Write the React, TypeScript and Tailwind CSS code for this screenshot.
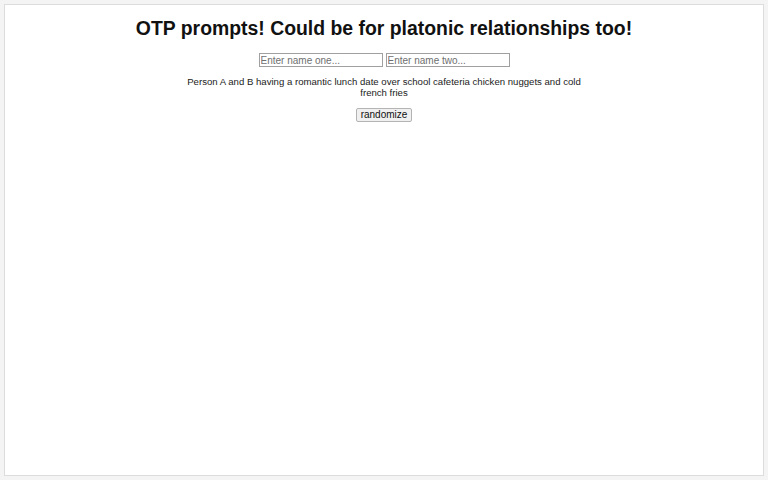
import { useState } from "react";

const prompts = [
  "Person A and B having a romantic lunch date over school cafeteria chicken nuggets and cold french fries",
  "Person A teaching B how to ride a bike in an empty parking lot at midnight",
  "Person A and B getting stuck in an elevator with a half-eaten box of donuts",
];

export default function App() {
  const [one, setOne] = useState("");
  const [two, setTwo] = useState("");
  const [idx, setIdx] = useState(0);

  const a = one.trim() || "A";
  const b = two.trim() || "B";
  const text = prompts[idx]
    .replace("Person A", `Person ${a}`)
    .replace("and B", `and ${b}`)
    .replace("B how", `${b} how`);

  return (
    <div className="min-h-screen bg-[#f4f4f4] p-[4px] font-['Liberation_Sans',Arial,sans-serif] text-black">
      <div className="flex h-[472px] flex-col items-center border border-[#dcdcdc] bg-white pt-[9px]">
        <h1 className="text-[19.4px] font-bold leading-[28px] text-[#111]">
          OTP prompts! Could be for platonic relationships too!
        </h1>
        <div className="mt-[11px] flex gap-[3px]">
          <input
            value={one}
            onChange={(e) => setOne(e.target.value)}
            placeholder="Enter name one..."
            className="h-[14px] w-[124px] border border-[#a0a0a0] px-[1px] text-[10px] leading-[12px] placeholder-[#6f6f6f] outline-none"
          />
          <input
            value={two}
            onChange={(e) => setTwo(e.target.value)}
            placeholder="Enter name two..."
            className="h-[14px] w-[124px] border border-[#a0a0a0] px-[1px] text-[10px] leading-[12px] placeholder-[#6f6f6f] outline-none"
          />
        </div>
        <p className="mt-[9px] w-[400px] text-center text-[9.6px] leading-[11px] text-[#222]">{text}</p>
        <button
          type="button"
          onClick={() => setIdx((idx + 1) % prompts.length)}
          className="mt-[10px] h-[14px] rounded-[2px] border border-[#b4b4b4] bg-[#f0f0f0] px-[4px] text-[10px] leading-[12px] text-[#111]"
        >
          randomize
        </button>
      </div>
    </div>
  );
}
